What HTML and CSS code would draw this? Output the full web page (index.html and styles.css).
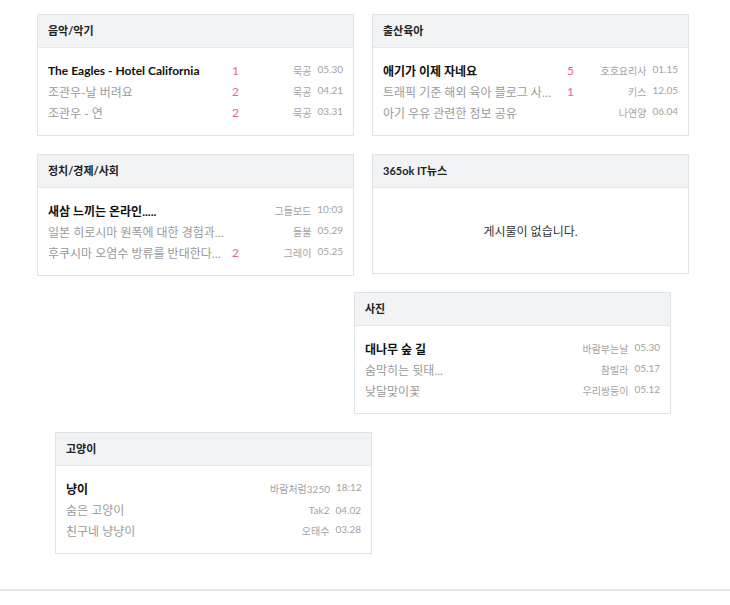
FILE: index.html
```html
<!DOCTYPE html>
<html lang="ko">
<head>
<meta charset="utf-8">
<title>게시판</title>
<link rel="stylesheet" href="styles.css">
</head>
<body>
<div class="board-grid">
  <div class="row">
    <section class="box">
      <h2 class="box-head">음악/악기</h2>
      <ul class="box-body">
        <li class="item first"><span class="title">The Eagles - Hotel California</span><span class="count">1</span><span class="meta"><span>묵공</span><span>05.30</span></span></li>
        <li class="item"><span class="title">조관우-날 버려요</span><span class="count">2</span><span class="meta"><span>묵공</span><span>04.21</span></span></li>
        <li class="item"><span class="title">조관우 - 연</span><span class="count">2</span><span class="meta"><span>묵공</span><span>03.31</span></span></li>
      </ul>
    </section>
    <section class="box">
      <h2 class="box-head">출산육아</h2>
      <ul class="box-body">
        <li class="item first"><span class="title">애기가 이제 자네요</span><span class="count">5</span><span class="meta"><span>호호요리사</span><span>01.15</span></span></li>
        <li class="item"><span class="title">트래픽 기준 해외 육아 블로그 사이트 추천</span><span class="count">1</span><span class="meta"><span>키스</span><span>12.05</span></span></li>
        <li class="item"><span class="title">아기 우유 관련한 정보 공유</span><span class="count"></span><span class="meta"><span>나연양</span><span>06.04</span></span></li>
      </ul>
    </section>
  </div>
  <div class="row">
    <section class="box">
      <h2 class="box-head">정치/경제/사회</h2>
      <ul class="box-body">
        <li class="item first"><span class="title">새삼 느끼는 온라인.....</span><span class="count"></span><span class="meta"><span>그들보드</span><span>10:03</span></span></li>
        <li class="item"><span class="title">일본 히로시마 원폭에 대한 경험과 생각</span><span class="count"></span><span class="meta"><span>들불</span><span>05.29</span></span></li>
        <li class="item"><span class="title">후쿠시마 오염수 방류를 반대한다는 사람들</span><span class="count">2</span><span class="meta"><span>그레이</span><span>05.25</span></span></li>
      </ul>
    </section>
    <section class="box empty-box">
      <h2 class="box-head">365ok IT뉴스</h2>
      <div class="empty">게시물이 없습니다.</div>
    </section>
  </div>
  <div class="row row-photo">
    <section class="box">
      <h2 class="box-head">사진</h2>
      <ul class="box-body">
        <li class="item first"><span class="title">대나무 숲 길</span><span class="count"></span><span class="meta"><span>바람부는날</span><span>05.30</span></span></li>
        <li class="item"><span class="title">숨막히는 뒷태...</span><span class="count"></span><span class="meta"><span>참빌라</span><span>05.17</span></span></li>
        <li class="item"><span class="title">낮달맞이꽃</span><span class="count"></span><span class="meta"><span>우리쌍둥이</span><span>05.12</span></span></li>
      </ul>
    </section>
  </div>
  <div class="row row-cat">
    <section class="box">
      <h2 class="box-head">고양이</h2>
      <ul class="box-body">
        <li class="item first"><span class="title">냥이</span><span class="count"></span><span class="meta"><span>바람처럼3250</span><span>18:12</span></span></li>
        <li class="item"><span class="title">숨은 고양이</span><span class="count"></span><span class="meta"><span>Tak2</span><span>04.02</span></span></li>
        <li class="item"><span class="title">친구네 냥냥이</span><span class="count"></span><span class="meta"><span>오태수</span><span>03.28</span></span></li>
      </ul>
    </section>
  </div>
</div>
<footer class="page-foot"></footer>
</body>
</html>
```

FILE: styles.css
```css
html, body {
  margin: 0;
  padding: 0;
  background: #fff;
}
body {
  font-family: Lato, "Noto Sans CJK KR", sans-serif;
  color: #222;
}
.board-grid {
  display: flex;
  flex-direction: column;
  gap: 18px;
  padding: 14px 0 0 37px;
}
.row {
  display: flex;
  align-items: flex-start;
  gap: 18px;
}
.row-photo {
  margin-top: -2px;
  margin-left: 317px;
}
.row-cat {
  margin-left: 18px;
}
.box {
  box-sizing: border-box;
  width: 317px;
  border: 1px solid #dfe3e8;
  background: #fff;
}
.box-head {
  margin: 0;
  height: 32px;
  line-height: 31px;
  padding: 0 10px;
  background: #f1f3f5;
  border-bottom: 1px solid #e3e7ec;
  font-size: 11px;
  font-weight: 700;
  color: #222;
}
.box-body {
  list-style: none;
  margin: 0;
  padding: 12px 10px;
}
.item {
  display: flex;
  align-items: center;
  height: 21px;
  font-size: 12px;
  color: #9a9a9a;
}
.item.first .title {
  color: #111;
  font-weight: 700;
}
.title {
  flex: 0 0 176px;
  width: 176px;
  white-space: nowrap;
  overflow: hidden;
  text-overflow: ellipsis;
}
.count {
  flex: 0 0 20px;
  padding-left: 8px;
  color: #f0628c;
}
.meta {
  margin-left: auto;
  display: flex;
  gap: 6px;
  font-size: 10px;
  color: #a3a3a3;
  white-space: nowrap;
}
.empty-box {
  height: 120px;
  display: flex;
  flex-direction: column;
}
.empty {
  flex: 1;
  display: flex;
  align-items: center;
  justify-content: center;
  font-size: 12px;
  color: #333;
}
.page-foot {
  margin-top: 35px;
  height: 0;
  border-top: 1px solid #e8ecf0;
  border-bottom: 1px solid #dde3e9;
}
```
